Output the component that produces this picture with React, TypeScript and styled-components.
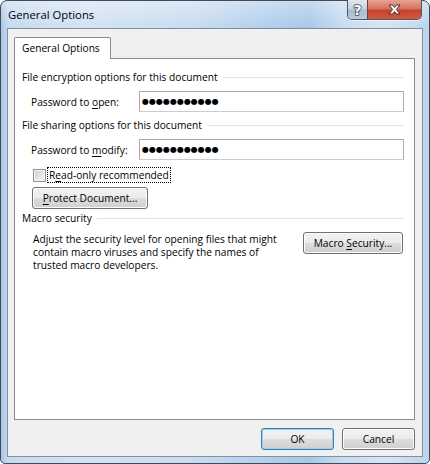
import React from 'react';
import styled, { createGlobalStyle, css } from 'styled-components';

const Global = createGlobalStyle`
  html, body { margin: 0; padding: 0; background: #ffffff; }
  body {
    width: 430px;
    height: 464px;
    overflow: hidden;
    font-family: "Open Sans", "Liberation Sans", sans-serif;
    font-size: 10.2px;
    color: #000;
  }
  * { box-sizing: border-box; }
`;

const Window = styled.div`
  width: 430px;
  height: 464px;
  border: 1px solid #414c59;
  border-radius: 7px 7px 5px 5px;
  padding: 0 6px 6px 6px;
  display: flex;
  flex-direction: column;
  background:
    linear-gradient(180deg, rgba(255,255,255,0.35) 0px, rgba(255,255,255,0) 26px),
    linear-gradient(90deg, #a9c6e4 0px, #c7dbef 7px, #d3e3f3 20%, #c9dcf0 45%, #b2cfec 62%, #a7c8ea 72%, #c6dcf1 80%, #d6e5f4 90%, #bcd4ec 100%);
`;

const TitleBar = styled.div`
  height: 27px;
  display: flex;
  align-items: flex-start;
  padding-left: 1px;
`;

const Title = styled.div`
  flex: 1;
  line-height: 28px;
  font-size: 11.3px;
  color: #000;
`;

const Caption = styled.div`
  display: flex;
  margin-top: -1px;
  margin-right: 1px;
  height: 20px;
  border: 1px solid #4a5665;
  border-top: none;
  border-radius: 0 0 5px 5px;
  overflow: hidden;
  box-shadow: 0 1px 0 rgba(255,255,255,0.6);
`;

const CaptionButton = styled.div<{ $close?: boolean }>`
  display: flex;
  align-items: center;
  justify-content: center;
  width: ${p => (p.$close ? '54px' : '19px')};
  ${p =>
    p.$close
      ? css`
          background: linear-gradient(180deg, #e8a494 0%, #d9705d 45%, #c7432d 55%, #d05a40 100%);
          border-left: 1px solid #7a3a33;
        `
      : css`
          background: linear-gradient(180deg, #dfe8f1 0%, #c4d3e2 45%, #aabdd0 55%, #b8cadb 100%);
        `}
`;

const Client = styled.div`
  flex: 1;
  display: flex;
  flex-direction: column;
  background: #f0f0f0;
  border: 1px solid #7f8ea0;
  padding: 8px 7px 6px 6px;
`;

const Tab = styled.div`
  position: relative;
  z-index: 1;
  width: 97px;
  height: 22px;
  margin-bottom: -1px;
  background: #ffffff;
  border: 1px solid #898c95;
  border-bottom: none;
  border-radius: 2px 2px 0 0;
  padding-left: 7px;
  line-height: 21px;
`;

const Panel = styled.div`
  flex: 1;
  background: #ffffff;
  border: 1px solid #898c95;
  padding: 11px 10px 0 7px;
  display: flex;
  flex-direction: column;
`;

const GroupHeader = styled.div<{ $gap: number }>`
  display: flex;
  align-items: center;
  height: 15px;
  line-height: 15px;
  margin-top: ${p => p.$gap}px;
  white-space: nowrap;
  &::after {
    content: '';
    flex: 1;
    height: 1px;
    margin-left: 5px;
    background: #dde3ea;
  }
`;

const FieldRow = styled.div`
  display: flex;
  align-items: center;
  margin-top: 6px;
  padding-left: 9px;
`;

const FieldLabel = styled.div`
  width: 108px;
`;

const PasswordBox = styled.div`
  flex: 1;
  height: 21px;
  border: 1px solid #abadb3;
  border-bottom-color: #c9ccd3;
  background: #ffffff;
  padding-left: 2px;
  display: flex;
  align-items: center;
`;

const Dots = styled.span`
  font-family: "DejaVu Sans", sans-serif;
  font-size: 8px;
  letter-spacing: 0px;
  color: #000;
`;

const Mnemonic = styled.span`
  text-decoration: underline;
  text-underline-offset: 2px;
`;

const CheckRow = styled.div`
  display: flex;
  align-items: center;
  margin-top: 7px;
  padding-left: 11px;
  height: 16px;
`;

const CheckBox = styled.div`
  width: 13px;
  height: 13px;
  border: 1px solid #8e8f8f;
  background: linear-gradient(135deg, #cbcbcb 0%, #e6e6e6 60%, #f4f4f4 100%);
  box-shadow: inset 0 0 0 1px #f4f4f4;
  margin-right: 1px;
`;

const FocusLabel = styled.div`
  height: 16px;
  line-height: 14px;
  padding: 0 1px;
  border: 1px dotted #000;
`;

const Button = styled.div<{ $default?: boolean; $width: number }>`
  width: ${p => p.$width}px;
  height: 22px;
  border: 1px solid ${p => (p.$default ? '#3c7fb1' : '#707070')};
  border-radius: 3px;
  background: linear-gradient(180deg, #f2f2f2 0%, #ebebeb 50%, #dddddd 51%, #cfcfcf 100%);
  box-shadow: inset 0 0 0 1px ${p => (p.$default ? '#98d1ef' : '#fcfcfc')};
  display: flex;
  align-items: center;
  justify-content: center;
  line-height: 20px;
  white-space: nowrap;
`;

const ProtectRow = styled.div`
  margin-top: 4px;
  padding-left: 10px;
`;

const MacroBody = styled.div`
  display: flex;
  align-items: flex-start;
  margin-top: 6px;
  padding-left: 11px;
`;

const MacroText = styled.div`
  flex: 1;
  line-height: 13px;
  padding-top: 1px;
`;

const MacroButtonSlot = styled.div`
  margin-right: 1px;
`;

const Footer = styled.div`
  display: flex;
  justify-content: flex-end;
  gap: 8px;
  margin-top: 8px;
`;

const HelpGlyph = () => (
  <svg width="13" height="15" viewBox="0 0 13 15">
    <text
      x="6.5"
      y="13"
      textAnchor="middle"
      fontFamily="DejaVu Sans, sans-serif"
      fontWeight="bold"
      fontSize="14"
      fill="#ffffff"
      stroke="#46505e"
      strokeWidth="1.6"
      paintOrder="stroke"
    >
      ?
    </text>
  </svg>
);

const CloseGlyph = () => (
  <svg width="13" height="11" viewBox="0 0 13 11">
    <path
      d="M1 1 H4.5 L6.5 3.4 L8.5 1 H12 L8.4 5.5 L12 10 H8.5 L6.5 7.6 L4.5 10 H1 L4.6 5.5 Z"
      fill="#ffffff"
      stroke="#4a2a26"
      strokeWidth="1"
      strokeLinejoin="round"
    />
  </svg>
);

const PASSWORD = '\u25CF'.repeat(11);

export default function App() {
  return (
    <>
      <Global />
      <Window>
        <TitleBar>
          <Title>General Options</Title>
          <Caption>
            <CaptionButton>
              <HelpGlyph />
            </CaptionButton>
            <CaptionButton $close>
              <CloseGlyph />
            </CaptionButton>
          </Caption>
        </TitleBar>
        <Client>
          <Tab>General Options</Tab>
          <Panel>
            <GroupHeader $gap={0}>File encryption options for this document</GroupHeader>
            <FieldRow>
              <FieldLabel>
                Password to <Mnemonic>o</Mnemonic>pen:
              </FieldLabel>
              <PasswordBox>
                <Dots>{PASSWORD}</Dots>
              </PasswordBox>
            </FieldRow>
            <GroupHeader $gap={6}>File sharing options for this document</GroupHeader>
            <FieldRow>
              <FieldLabel>
                Password to <Mnemonic>m</Mnemonic>odify:
              </FieldLabel>
              <PasswordBox>
                <Dots>{PASSWORD}</Dots>
              </PasswordBox>
            </FieldRow>
            <CheckRow>
              <CheckBox />
              <FocusLabel>
                R<Mnemonic>e</Mnemonic>ad-only recommended
              </FocusLabel>
            </CheckRow>
            <ProtectRow>
              <Button $width={116}>
                <span>
                  <Mnemonic>P</Mnemonic>rotect Document...
                </span>
              </Button>
            </ProtectRow>
            <GroupHeader $gap={2}>Macro security</GroupHeader>
            <MacroBody>
              <MacroText>
                Adjust the security level for opening files that might
                <br />
                contain macro viruses and specify the names of
                <br />
                trusted macro developers.
              </MacroText>
              <MacroButtonSlot>
                <Button $width={100}>
                  <span>
                    Macro <Mnemonic>S</Mnemonic>ecurity...
                  </span>
                </Button>
              </MacroButtonSlot>
            </MacroBody>
          </Panel>
          <Footer>
            <Button $default $width={73}>OK</Button>
            <Button $width={73}>Cancel</Button>
          </Footer>
        </Client>
      </Window>
    </>
  );
}
